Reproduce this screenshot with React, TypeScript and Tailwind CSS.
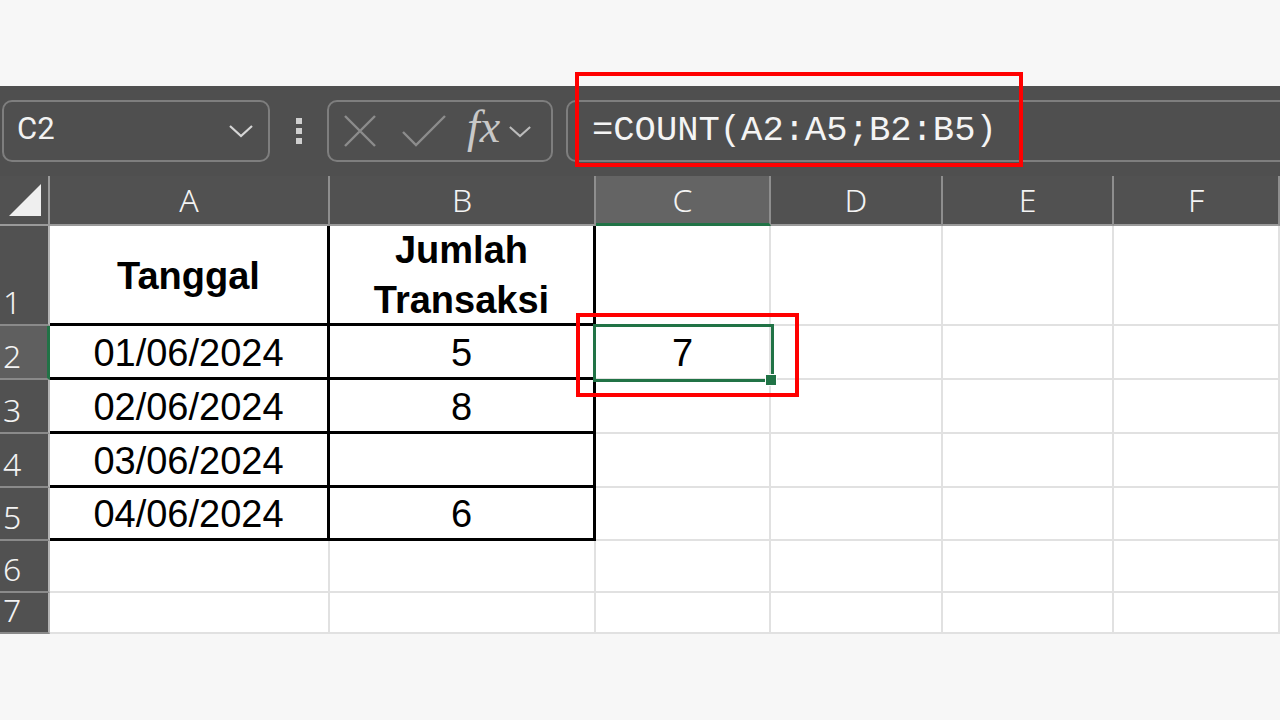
import React from 'react';

const cols = ['A', 'B', 'C', 'D', 'E', 'F'];

const rows: { h: string; a?: React.ReactNode; b?: React.ReactNode; c?: React.ReactNode; table: boolean }[] = [
  {
    h: 'h-[100px]',
    a: <span className="font-bold">Tanggal</span>,
    b: (
      <div className="font-bold leading-[50px] text-center -mt-[2px]">
        <div>Jumlah</div>
        <div>Transaksi</div>
      </div>
    ),
    table: true,
  },
  { h: 'h-[54px]', a: '01/06/2024', b: '5', c: '7', table: true },
  { h: 'h-[54px]', a: '02/06/2024', b: '8', table: true },
  { h: 'h-[54px]', a: '03/06/2024', table: true },
  { h: 'h-[53px]', a: '04/06/2024', b: '6', table: true },
  { h: 'h-[52px]', table: false },
  { h: 'h-[41px]', table: false },
];

const widths = ['w-[280px]', 'w-[266px]', 'w-[175px]', 'w-[172px]', 'w-[171px]', 'w-[166px]'];

const Chevron = ({ className }: { className?: string }) => (
  <svg viewBox="0 0 26 14" className={className} fill="none" stroke="currentColor" strokeWidth="2.2">
    <path d="M2 2 L13 12 L24 2" />
  </svg>
);

const FormulaBar = () => (
  <div className="h-[90px] bg-[#4f4f4f] flex items-center pl-[2px] gap-0">
    <div className="w-[268px] h-[62px] rounded-[10px] border-2 border-[#7e7e7e] flex items-center justify-between pl-[13px] pr-[14px]">
      <span className="text-[31px] text-[#f2f2f2] -mt-[3px]" style={{ fontFamily: 'Roboto, "Noto Sans", sans-serif' }}>
        C2
      </span>
      <Chevron className="w-[26px] h-[14px] text-[#d6d6d6]" />
    </div>
    <div className="w-[57px] flex flex-col items-center gap-[4px]">
      <div className="w-[6px] h-[6px] bg-[#cfcfcf]" />
      <div className="w-[6px] h-[6px] bg-[#cfcfcf]" />
      <div className="w-[6px] h-[6px] bg-[#cfcfcf]" />
    </div>
    <div className="w-[226px] h-[62px] rounded-[10px] border-2 border-[#7e7e7e] flex items-center pl-[14px]">
      <svg viewBox="0 0 34 34" className="w-[34px] h-[34px] text-[#8c8c8c]" fill="none" stroke="currentColor" strokeWidth="2.4">
        <path d="M2 2 L32 32 M32 2 L2 32" />
      </svg>
      <svg viewBox="0 0 46 34" className="ml-[24px] w-[46px] h-[34px] text-[#8c8c8c]" fill="none" stroke="currentColor" strokeWidth="2.4">
        <path d="M2 18 L15 31 L44 2" />
      </svg>
      <span
        className="ml-[20px] italic text-[46px] leading-none text-[#c8c8c8] -mt-[8px]"
        style={{ fontFamily: '"Liberation Serif", "DejaVu Serif", serif' }}
      >
        fx
      </span>
      <Chevron className="ml-[8px] w-[24px] h-[13px] text-[#bcbcbc]" />
    </div>
    <div className="ml-[13px] flex-1 h-[62px] rounded-l-[10px] border-2 border-r-0 border-[#7e7e7e] flex items-center pl-[24px]">
      <span
        className="text-[35.5px] text-[#f4f4f4]"
        style={{ fontFamily: '"Liberation Mono", "DejaVu Sans Mono", monospace' }}
      >
        =COUNT(A2:A5;B2:B5)
      </span>
    </div>
  </div>
);

const HeaderRow = () => (
  <div className="flex h-[50px] bg-[#515151]" style={{ fontFamily: '"Noto Sans", "Open Sans", sans-serif' }}>
    <div className="w-[50px] h-full border-r-2 border-b-2 border-r-[#9a9a9a] border-b-[#9a9a9a] flex items-end justify-end pr-[7px] pb-[8px]">
      <svg viewBox="0 0 32 32" className="w-[32px] h-[32px]">
        <path d="M0 32 L32 32 L32 0 Z" fill="#efefef" />
      </svg>
    </div>
    {cols.map((c, i) => (
      <div
        key={c}
        className={`${widths[i]} h-full flex items-center justify-center text-[32px] font-light text-[#f3f3f3] border-r-2 border-r-[#8e8e8e] ${
          c === 'C' ? 'bg-[#646464] border-b-[3px] border-b-[#217346]' : 'border-b-2 border-b-[#9a9a9a]'
        }`}
      >
        {c}
      </div>
    ))}
  </div>
);

const BodyRow = ({ row, index }: { row: (typeof rows)[number]; index: number }) => {
  const selected = index === 1;
  const cells = [row.a, row.b, row.c];
  return (
    <div className={`flex ${row.h}`}>
      <div
        className={`w-[50px] h-full flex items-end pl-[3px] pb-[2px] text-[32px] font-light leading-none text-[#f3f3f3] border-b-2 border-b-[#8a8a8a] ${
          selected ? 'bg-[#5f5f5f] border-r-[3px] border-r-[#217346]' : 'bg-[#515151] border-r-2 border-r-[#b4b4b4]'
        }`}
        style={{ fontFamily: '"Noto Sans", "Open Sans", sans-serif' }}
      >
        <span className="pb-[4px]">{index + 1}</span>
      </div>
      {cols.map((c, i) => {
        const inTable = row.table && i < 2;
        return (
          <div
            key={c}
            className={`${widths[i]} h-full bg-white flex items-center justify-center text-[38px] text-black ${
              inTable ? 'border-r-[3px] border-b-[3px] border-black' : 'border-r-2 border-b-2 border-[#e1e1e1]'
            }`}
            style={{ fontFamily: '"Liberation Sans", Arial, sans-serif' }}
          >
            {cells[i] !== undefined ? <span className="pt-[3px]">{cells[i]}</span> : null}
          </div>
        );
      })}
    </div>
  );
};

export default function App() {
  return (
    <div className="relative w-[1280px] h-[720px] bg-[#f7f7f7] overflow-hidden flex flex-col">
      <div className="h-[86px]" />
      <FormulaBar />
      <HeaderRow />
      <div className="flex flex-col">
        {rows.map((r, i) => (
          <BodyRow key={i} row={r} index={i} />
        ))}
      </div>

      {/* selection of C2 */}
      <div className="absolute left-[593px] top-[324px] w-[181px] h-[58px] border-[3px] border-[#217346]" />
      <div className="absolute left-[765px] top-[374px] w-[12px] h-[12px] bg-[#217346] border-[1.5px] border-white" />

      {/* annotation boxes */}
      <div className="absolute left-[575px] top-[72px] w-[448px] h-[95px] border-4 border-[#ff0000]" />
      <div className="absolute left-[576px] top-[313px] w-[223px] h-[84px] border-4 border-[#ff0000]" />
    </div>
  );
}
